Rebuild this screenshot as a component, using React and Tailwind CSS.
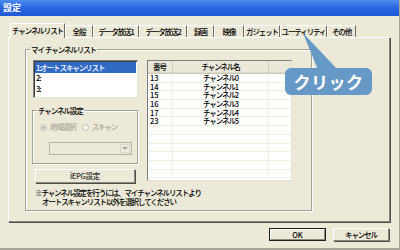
import React from 'react';

const tabs = [
  { label: 'チャンネルリスト', w: 'w-[55px]', active: true },
  { label: '全般', w: 'w-[28px]' },
  { label: 'データ放送1', w: 'w-[46px]' },
  { label: 'データ放送2', w: 'w-[48px]' },
  { label: '録画', w: 'w-[27px]' },
  { label: '映像', w: 'w-[30px]' },
  { label: 'ガジェット', w: 'w-[36px]' },
  { label: 'ユーティリティ', w: 'w-[47px]' },
  { label: 'その他', w: 'w-[29px]' },
];

const channels = [
  { no: '13', name: 'チャンネル0' },
  { no: '14', name: 'チャンネル1' },
  { no: '15', name: 'チャンネル2' },
  { no: '16', name: 'チャンネル3' },
  { no: '17', name: 'チャンネル4' },
  { no: '23', name: 'チャンネル5' },
  { no: '', name: '' },
  { no: '', name: '' },
  { no: '', name: '' },
  { no: '', name: '' },
  { no: '', name: '' },
  { no: '', name: '' },
];

const font = { fontFamily: '"Noto Sans CJK JP", "Liberation Sans", sans-serif' };

const App = () => {
  return (
    <div
      style={font}
      className="relative w-[400px] h-[250px] bg-[#ece9d8] overflow-hidden flex flex-col text-[7.5px] tracking-[-1.1px] font-medium text-black border-r border-b-2 border-[#a7a598]"
    >
      {/* Title bar */}
      <div className="h-[16px] shrink-0 bg-gradient-to-b from-[#4f8cf0] via-[#2865df] to-[#2059d6] px-[3px] text-white font-bold text-[9px] tracking-normal leading-[16px]">
        設定
      </div>

      {/* Tabs */}
      <div className="mt-[7px] pl-[10px] flex items-end h-[14px] shrink-0 relative z-10">
        {tabs.map((t) => (
          <div
            key={t.label}
            className={`${t.w} ${
              t.active ? 'h-[15px] -mb-px bg-[#ece9d8]' : 'h-[12px]'
            } shrink-0 flex items-center justify-center border-l border-t border-white border-r border-r-[#6f6d63] whitespace-nowrap leading-none`}
          >
            {t.label}
          </div>
        ))}
      </div>

      {/* Tab panel */}
      <div className="ml-[8px] w-[382px] h-[185px] shrink-0 border-l border-t border-white border-r border-b border-r-[#8a887d] border-b-[#8a887d] shadow-[1px_1px_0_#4f4e48] pl-[16px] pt-[11px]">
        {/* My channel list group */}
        <div className="relative w-[287px] h-[162px] border border-[#a3a195] shadow-[inset_1px_1px_0_#fff,1px_1px_0_#fff] pl-[7px] pt-[10px]">
          <div className="absolute left-[4px] top-[-5px] bg-[#ece9d8] px-[1px] leading-[9px] whitespace-nowrap">
            マイ&nbsp;&nbsp;チャンネルリスト
          </div>

          <div className="flex">
            {/* Left column */}
            <div className="w-[105px] shrink-0 flex flex-col">
              <div className="h-[38px] bg-white border border-[#7f7f7f] border-r-[#e4e1d6] border-b-[#e4e1d6] shadow-[inset_1px_1px_0_#3c3c3c] pt-[1px] px-[1px]">
                <div className="h-[11px] bg-[#316ac5] text-white leading-[11px] pl-[1px] whitespace-nowrap">
                  1:オートスキャンリスト
                </div>
                <div className="h-[10.5px] leading-[10.5px] pl-[1px]">2:</div>
                <div className="h-[10.5px] leading-[10.5px] pl-[1px]">3:</div>
              </div>

              {/* Channel settings group */}
              <div className="relative mt-[12px] -ml-px w-[106px] h-[54px] border border-[#a3a195] shadow-[inset_1px_1px_0_#fff,1px_1px_0_#fff] pl-[7px] pt-[11px]">
                <div className="absolute left-[4px] top-[-5px] bg-[#ece9d8] px-[1px] leading-[9px] whitespace-nowrap">
                  チャンネル設定
                </div>
                <div className="flex items-center h-[10px] text-[#aca899]">
                  <span className="w-[7px] h-[7px] rounded-full border border-[#c2bfb1] bg-[#f4f2ea] flex items-center justify-center">
                    <span className="w-[3px] h-[3px] rounded-full bg-[#aca899]" />
                  </span>
                  <span className="ml-[3px] whitespace-nowrap">地域選択</span>
                  <span className="ml-[6px] w-[7px] h-[7px] rounded-full border border-[#c2bfb1] bg-[#f4f2ea]" />
                  <span className="ml-[3px] whitespace-nowrap">スキャン</span>
                </div>
                <div className="mt-[10px] ml-[9px] w-[83px] h-[13px] border border-[#b5b2a5] flex justify-end p-px">
                  <div className="w-[10px] h-full border border-[#d8d5c8] bg-[#eeebdf] flex items-center justify-center">
                    <span className="w-0 h-0 border-l-[3px] border-r-[3px] border-t-[3px] border-l-transparent border-r-transparent border-t-[#aca899]" />
                  </div>
                </div>
              </div>

              <div className="mt-[5px] ml-[2px] w-[100px] h-[14px] bg-[#ece9d8] border border-white border-r-[#8a887d] border-b-[#8a887d] shadow-[1px_1px_0_#4f4e48] flex items-center justify-center text-[#333] tracking-[-0.3px]">
                iEPG設定
              </div>
            </div>

            {/* Channel list view */}
            <div className="ml-[9px] w-[145px] h-[121px] bg-white border border-[#7f7f7f] border-r-[#e4e1d6] border-b-[#e4e1d6] overflow-hidden">
              <div className="flex h-[13px] bg-[#ebe8da] border-b border-[#cfcbbb] shadow-[inset_0_-1px_0_#dcd8c8]">
                <div className="w-[25px] shrink-0 border-r border-[#d2cec0] pl-[5px] leading-[12px]">番号</div>
                <div className="w-[96px] shrink-0 border-r border-[#d2cec0] text-center leading-[12px]">チャンネル名</div>
                <div className="flex-1" />
              </div>
              {channels.map((c, i) => (
                <div key={i} className="flex h-[8.7px] border-b border-[#f1eee4] leading-[8px]">
                  <div className="w-[25px] shrink-0 border-r border-[#f1eee4] pl-[2px] tracking-normal">{c.no}</div>
                  <div className="w-[96px] shrink-0 border-r border-[#f1eee4] text-center">{c.name}</div>
                  <div className="flex-1" />
                </div>
              ))}
            </div>
          </div>

          <div className="mt-[5px] leading-[9px] whitespace-nowrap">
            <div className="pl-[2px]">※チャンネル設定を行うには、マイチャンネルリストより</div>
            <div className="pl-[9px]">オートスキャンリスト以外を選択してください</div>
          </div>
        </div>
      </div>

      {/* Bottom buttons */}
      <div className="mt-[6px] pr-[10px] flex justify-end gap-[7px]">
        <div className="w-[57px] h-[13px] border border-[#1f1f1f] flex">
          <div className="flex-1 border border-white border-r-[#8a887d] border-b-[#8a887d] flex items-center justify-center tracking-normal">
            OK
          </div>
        </div>
        <div className="w-[56px] h-[13px] bg-[#ece9d8] border border-white border-r-[#8a887d] border-b-[#8a887d] shadow-[1px_1px_0_#4f4e48] flex items-center justify-center">
          キャンセル
        </div>
      </div>

      {/* Callout */}
      <svg className="absolute left-0 top-0 pointer-events-none" width="400" height="250">
        <polygon points="303,33 318,70 338,70" fill="#6799c7" />
      </svg>
      <div className="absolute left-[285px] top-[68px] w-[87px] h-[27px] rounded-[6px] bg-[#6799c7] text-white font-bold text-[17px] tracking-[0.5px] flex items-center justify-center leading-none">
        クリック
      </div>
    </div>
  );
};

export default App;
